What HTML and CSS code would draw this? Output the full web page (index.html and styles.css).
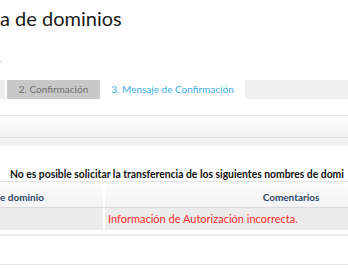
FILE: index.html
```html
<!DOCTYPE html>
<html lang="es">
<head>
<meta charset="utf-8">
<link rel="stylesheet" href="styles.css">
</head>
<body>
<div class="page">
  <h1 class="title">a de dominios</h1>
  <div class="crumb">.</div>
  <div class="tabs">
    <div class="tab tab-first"></div>
    <div class="tab tab-done">2. Confirmación</div>
    <div class="tab tab-active">3. Mensaje de Confirmación</div>
    <div class="tab tab-rest"></div>
  </div>
  <div class="panel">
    <div class="panel-head"></div>
    <div class="panel-foot"></div>
  </div>
  <p class="msg">No es posible solicitar la transferencia de los siguientes nombres de domi</p>
  <div class="table">
    <div class="row head">
      <div class="cell c1">e dominio</div>
      <div class="cell c2">Comentarios</div>
    </div>
    <div class="row body">
      <div class="cell c1"></div>
      <div class="cell c2 err">Información de Autorización incorrecta.</div>
    </div>
  </div>
  <div class="bottom"></div>
</div>
</body>
</html>
```

FILE: styles.css
```css
html, body {
  margin: 0;
  padding: 0;
  background: #fff;
  overflow: hidden;
}
.page {
  width: 348px;
  overflow: hidden;
  font-family: Lato, "Open Sans", sans-serif;
  color: #111;
}
.title {
  margin: 0;
  padding-top: 5px;
  height: 30px;
  font-size: 20px;
  font-weight: 400;
  line-height: 26px;
  color: #1a1a1a;
}
.crumb {
  height: 45px;
  font-size: 9px;
  line-height: 48px;
  color: #bbb;
}
.tabs {
  display: flex;
  height: 19px;
  gap: 2px;
}
.tab {
  font-size: 10px;
  line-height: 19px;
  white-space: nowrap;
}
.tab-first {
  width: 5px;
  background: #ececec;
}
.tab-done {
  width: 93px;
  background: #c8c8c8;
  color: #707070;
  text-align: center;
}
.tab-active {
  width: 141px;
  background: #fff;
  color: #3aaee6;
  text-align: center;
}
.tab-rest {
  flex: 1;
  background: #efefef;
}
.panel {
  margin-top: 16px;
  border-top: 1px solid #e2e2e2;
}
.panel-head {
  height: 21px;
  background: linear-gradient(#fff, #f1f1f1);
  border-bottom: 1px solid #dedede;
}
.panel-foot {
  height: 8px;
  background: #f2f2f2;
}
.msg {
  margin: 0;
  padding: 22px 0 0 10px;
  height: 13px;
  font-size: 10.35px;
  font-weight: 700;
  line-height: 12px;
  white-space: nowrap;
  color: #111;
}
.table {
  border-top: 1px solid #e4e4e4;
}
.row {
  display: grid;
  grid-template-columns: 103px 372px;
  gap: 2px;
}
.row.head {
  height: 25px;
  border-bottom: 1px solid #dcdcdc;
}
.row.head .cell {
  background: linear-gradient(#fdfdfd, #f3f3f3);
  color: #2c4766;
  font-weight: 700;
  font-size: 10px;
  padding-top: 5px;
  line-height: 20px;
}
.row.head .c1 { text-align: left; }
.row.head .c2 { text-align: center; }
.row.body {
  height: 22px;
  border-bottom: 1px solid #fff;
}
.row.body .cell {
  background: #ececec;
  font-size: 11px;
  line-height: 21px;
}
.err {
  color: #ff2a2a;
  padding-left: 3px;
}
.bottom {
  margin-top: 3px;
  height: 28px;
  border-top: 2px solid #ececec;
  border-bottom: 1px solid #e6e6e6;
}
```
